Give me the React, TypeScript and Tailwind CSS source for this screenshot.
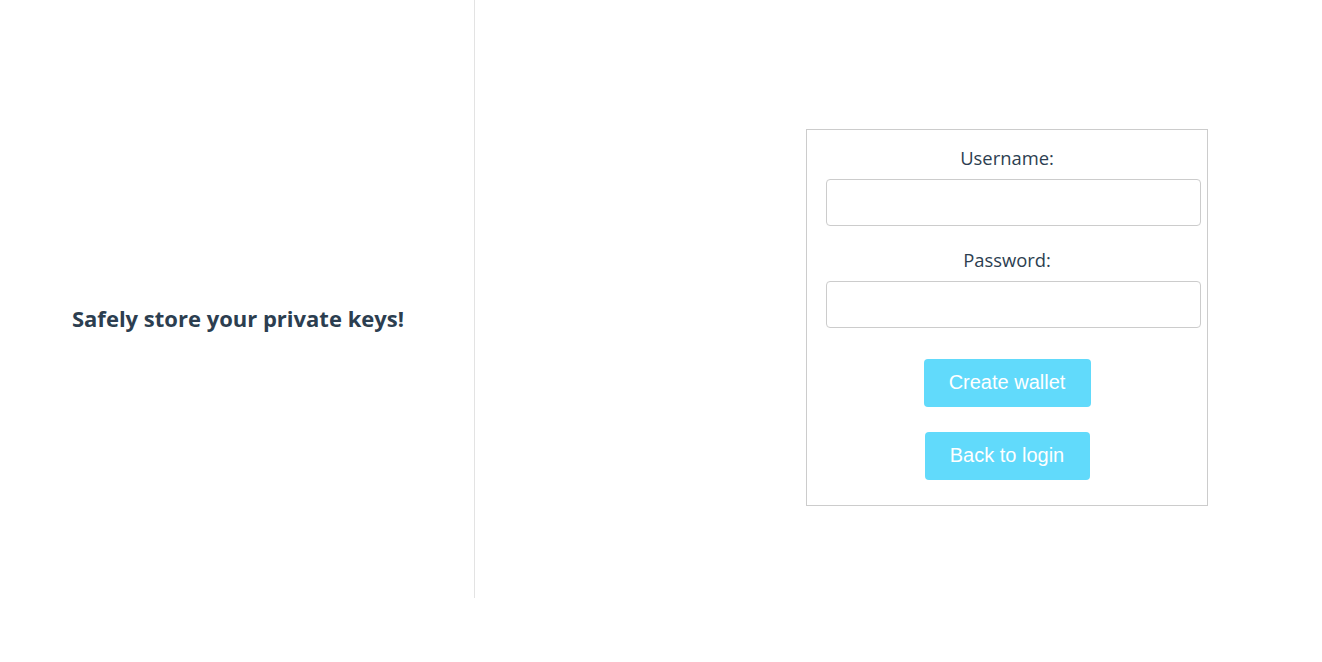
import React from "react";

const labelFont = { fontFamily: '"Open Sans", "Noto Sans", sans-serif' };
const btnFont = { fontFamily: '"Liberation Sans", Arial, sans-serif' };

export default function App() {
  return (
    <div className="flex w-full h-[598px] bg-white text-[#2c3e50]" style={labelFont}>
      <div className="w-[475px] h-full border-r border-[#e3e3e3] flex items-center justify-center pt-[38px] pl-[2px]">
        <h2 className="text-[22px] font-bold">Safely store your private keys!</h2>
      </div>

      <div className="flex-1 pl-[331px] pt-[129px]">
        <form className="w-[402px] h-[377px] border border-[#cccccc] pt-[16px] flex flex-col items-center">
          <label className="text-[18.4px] leading-[24px]">Username:</label>
          <input
            type="text"
            className="self-start ml-[19px] w-[375px] h-[47px] mt-[9px] border border-[#cccccc] rounded-[4px] outline-none"
          />
          <label className="text-[18.4px] leading-[24px] mt-[22px]">Password:</label>
          <input
            type="password"
            className="self-start ml-[19px] w-[375px] h-[47px] mt-[9px] border border-[#cccccc] rounded-[4px] outline-none"
          />
          <button
            type="button"
            className="mt-[31px] h-[48px] w-[167px] pb-[2px] bg-[#61dafb] rounded-[4px] text-white text-[20px]"
            style={btnFont}
          >
            Create wallet
          </button>
          <button
            type="button"
            className="mt-[25px] h-[48px] w-[165px] pb-[2px] bg-[#61dafb] rounded-[4px] text-white text-[20px]"
            style={btnFont}
          >
            Back to login
          </button>
        </form>
      </div>
    </div>
  );
}
